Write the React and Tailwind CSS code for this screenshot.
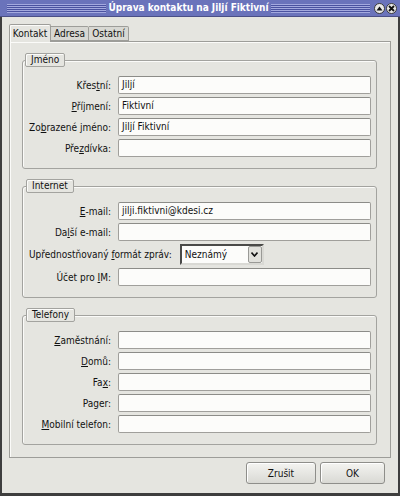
import React from "react";

// Okno "Úprava kontaktu" ve stylu GTK 2
const FONT = "font-['DejaVu_Sans_Condensed','DejaVu_Sans',sans-serif]";

const Stripes = () => (
  <div className="flex-1 flex flex-col gap-[1px] bg-[#4a52a0] py-[0px]">
    <div className="h-px bg-[#a3a9de]" />
    <div className="h-px bg-[#a3a9de]" />
    <div className="h-px bg-[#a3a9de]" />
    <div className="h-px bg-[#a3a9de]" />
    <div className="h-px bg-[#a3a9de]" />
  </div>
);

const TitleBar = () => (
  <div className="h-[17px] bg-[#6a73bb] flex items-center pl-[7px] pr-[3px] border-b border-[#4a4f86]">
    <Stripes />
    <div className="px-[2px] text-white font-bold text-[10px] leading-[12px] whitespace-nowrap">
      Úprava kontaktu na Jiljí Fiktivní
    </div>
    <Stripes />
    <div className="flex items-center gap-[1px] ml-[4px]">
      <div className="w-[11px] h-[11px] rounded-full bg-[#e8e8e8] border border-[#3a3a3a] flex items-center justify-center">
        <svg width="7" height="5" viewBox="0 0 7 5">
          <path d="M0.5 4.5 L3.5 0.5 L6.5 4.5 Z" fill="#111" />
        </svg>
      </div>
      <div className="w-[11px] h-[11px] rounded-full bg-[#e8e8e8] border border-[#3a3a3a] flex items-center justify-center">
        <svg width="7" height="7" viewBox="0 0 7 7">
          <path d="M1 1 L6 6 M6 1 L1 6" stroke="#111" strokeWidth="1.8" />
        </svg>
      </div>
    </div>
  </div>
);

const Input = ({ value }) => (
  <div className="flex-1 h-[18px] bg-[#fcfcfa] border border-[#a09f9b] border-t-[#8c8c88] rounded-[2px] pl-[3px] leading-[16px] text-[#111]">
    {value}
  </div>
);

const Row = ({ label, value }) => (
  <div className="flex items-center h-[18px]">
    <div className="w-[88px] text-right whitespace-nowrap">{label}</div>
    <div className="ml-[7px] flex-1 flex">
      <Input value={value} />
    </div>
  </div>
);

const Frame = ({ title, left, children }) => (
  <div className="relative border border-[#a3a39f] rounded-[3px] pt-[15px] pb-[11px] pr-[5px] shadow-[inset_1px_1px_0_#fbfbf9]">
    <div
      className={`absolute ${left} top-[-8px] h-[14px] px-[5px] border border-[#a3a39f] rounded-[2px] bg-[#e5e5e0] leading-[12px] shadow-[inset_1px_1px_0_#fbfbf9]`}
    >
      {title}
    </div>
    <div className="flex flex-col gap-[3px]">{children}</div>
  </div>
);

const Button = ({ children, w }) => (
  <div
    className={`${w} h-[22px] border border-[#8e8e8a] rounded-[3px] bg-linear-to-b from-[#f4f4f1] to-[#d9d9d4] flex items-center justify-center text-[#111] shadow-[inset_1px_1px_0_#ffffff]`}
  >
    {children}
  </div>
);

export default function App() {
  return (
    <div className={`${FONT} text-[10px] text-[#111] w-[400px] h-[496px] bg-[#e5e5e0] flex flex-col overflow-hidden`}>
      <TitleBar />
      <div className="flex-1 border-l-2 border-r-2 border-b-[3px] border-[#3e3e3e] flex flex-col pl-[7px] pr-[7px] pt-[6px]">
        {/* Záložky */}
        <div className="flex items-end h-[18px] relative z-10">
          <div className="w-[42px] h-[18px] -mb-px bg-[#e5e5e0] border border-b-0 border-[#9d9d99] rounded-t-[2px] shadow-[inset_1px_1px_0_#fbfbf9] flex items-center justify-center">
            Kontakt
          </div>
          <div className="w-[38px] h-[15px] bg-[#d8d8d3] border border-[#9d9d99] border-l-0 rounded-tr-[2px] flex items-center justify-center">
            Adresa
          </div>
          <div className="w-[40px] h-[15px] bg-[#d8d8d3] border border-[#9d9d99] border-l-0 rounded-tr-[2px] flex items-center justify-center">
            Ostatní
          </div>
        </div>

        {/* Panel */}
        <div className="h-[417px] border border-[#9d9d99] shadow-[inset_1px_1px_0_#fbfbf9] pl-[12px] pr-[13px] pt-[18px] flex flex-col gap-[17px]">
          <Frame title="Jméno" left="left-[2px]">
            <Row label={<>Křes<u>t</u>ní:</>} value="Jiljí" />
            <Row label={<><u>P</u>říjmení:</>} value="Fiktivní" />
            <Row label={<>Zo<u>b</u>razené jméno:</>} value="Jiljí Fiktivní" />
            <Row label={<>Pře<u>z</u>dívka:</>} value="" />
          </Frame>

          <Frame title="Internet" left="left-[3px]">
            <Row label={<><u>E</u>-mail:</>} value="jilji.fiktivni@kdesi.cz" />
            <Row label={<>Da<u>l</u>ší e-mail:</>} value="" />
            <div className="flex items-center h-[21px] pl-[6px]">
              <div className="whitespace-nowrap">
                Upřednostňovaný <u>f</u>ormát zpráv:
              </div>
              <div className="ml-[8px] w-[84px] h-[21px] bg-[#fcfcfa] border-2 border-[#4a4a48] border-r-[#d9d9d4] border-b-[#d9d9d4] flex items-center">
                <div className="flex-1 pl-[3px]">Neznámý</div>
                <div className="w-[14px] h-[17px] bg-[#e1e1dc] border border-[#9a9a96] rounded-[2px] flex items-center justify-center">
                  <svg width="7" height="5" viewBox="0 0 7 5">
                    <path d="M0.5 0.5 L3.5 4 L6.5 0.5" fill="none" stroke="#111" strokeWidth="1.6" />
                  </svg>
                </div>
              </div>
            </div>
            <Row label={<>Účet pro <u>I</u>M:</>} value="" />
          </Frame>

          <Frame title="Telefony" left="left-[3px]">
            <Row label={<><u>Z</u>aměstnání:</>} value="" />
            <Row label={<><u>D</u>omů:</>} value="" />
            <Row label={<>Fa<u>x</u>:</>} value="" />
            <Row label="Pager:" value="" />
            <Row label={<><u>M</u>obilní telefon:</>} value="" />
          </Frame>
        </div>

        {/* Tlačítka */}
        <div className="flex justify-end gap-[4px] mt-[4px] pr-[6px]">
          <Button w="w-[70px]">Zrušit</Button>
          <Button w="w-[65px]">OK</Button>
        </div>
      </div>
    </div>
  );
}
